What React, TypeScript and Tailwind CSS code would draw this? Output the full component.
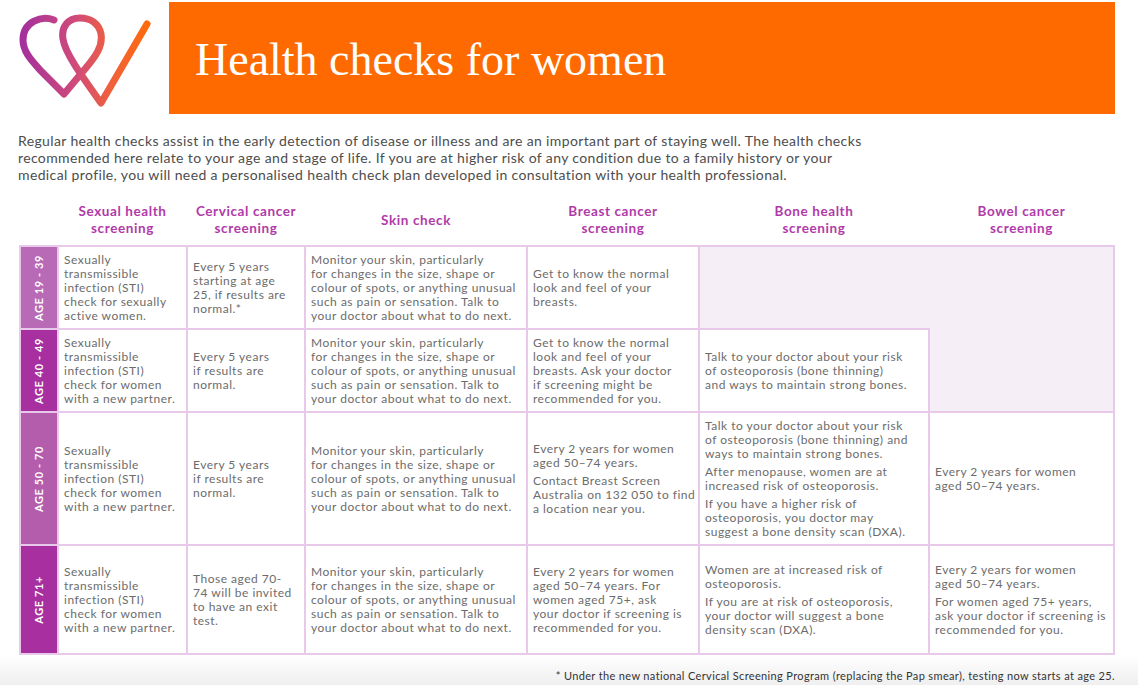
import React from "react";

const BORDER = "#e8c9ea";

const headers = [
  ["Sexual health", "screening"],
  ["Cervical cancer", "screening"],
  ["Skin check"],
  ["Breast cancer", "screening"],
  ["Bone health", "screening"],
  ["Bowel cancer", "screening"],
];

const skin = [
  [
    "Monitor your skin, particularly",
    "for changes in the size, shape or",
    "colour of spots, or anything unusual",
    "such as pain or sensation. Talk to",
    "your doctor about what to do next.",
  ],
];

const sti = [
  ["Sexually", "transmissible", "infection (STI)", "check for women", "with a new partner."],
];

const Logo = () => (
  <svg width="150" height="110" viewBox="0 0 150 110" className="block">
    <defs>
      <linearGradient id="lg" x1="18" y1="0" x2="148" y2="0" gradientUnits="userSpaceOnUse">
        <stop offset="0" stopColor="#a12f9e" />
        <stop offset="0.45" stopColor="#d24c78" />
        <stop offset="0.7" stopColor="#f0603c" />
        <stop offset="1" stopColor="#ff6b0c" />
      </linearGradient>
    </defs>
    <path
      d="M53 17 C40 12 22 19 22 37 C22 49 31 58 40 68 L63 91 L84 66 C95 53 102 43 100 31 C98 20 89 15 79 15 C67 15 60 24 62 36 C64 50 80 72 100 100 L146 21"
      fill="none"
      stroke="url(#lg)"
      strokeWidth="7"
      strokeLinecap="round"
      strokeLinejoin="round"
    />
  </svg>
);

const Cell = ({ paras, className = "" }: { paras: string[][]; className?: string }) => (
  <div className={`bg-white flex flex-col justify-center pl-[5px] text-[12px] leading-[14px] tracking-[0.5px] text-[#6c6c6c] whitespace-nowrap ${className}`}>
    {paras.map((p, i) => (
      <p key={i} className={i > 0 ? "mt-[4px]" : ""}>
        {p.map((l, j) => (
          <span key={j} className="block">
            {l}
          </span>
        ))}
      </p>
    ))}
  </div>
);

const Age = ({ label, color }: { label: string; color: string }) => (
  <div className="flex items-center justify-center" style={{ backgroundColor: color }}>
    <span className="[writing-mode:vertical-rl] rotate-180 text-white font-bold text-[11px] tracking-[0.6px]">
      {label}
    </span>
  </div>
);

export default function App() {
  return (
    <div
      className="w-[1138px] h-[685px] overflow-hidden bg-white flex flex-col"
      style={{ fontFamily: "Lato, 'Open Sans', sans-serif" }}
    >
      {/* top banner */}
      <div className="flex pt-[2px] pr-[23px]">
        <div className="w-[169px] h-[112px] flex items-center pl-[1px]">
          <Logo />
        </div>
        <div className="flex-1 h-[112px] bg-[#ff6a00] flex items-center pl-[26px]">
          <h1
            className="text-white text-[46px] leading-none pt-[4px]"
            style={{ fontFamily: "'Liberation Serif', serif" }}
          >
            Health checks for women
          </h1>
        </div>
      </div>

      <p className="pl-[18px] mt-[18px] text-[14px] leading-[17px] tracking-[0.37px] text-[#4d4d4d] whitespace-nowrap">
        Regular health checks assist in the early detection of disease or illness and are an important part of staying well. The health checks
        <br />
        recommended here relate to your age and stage of life. If you are at higher risk of any condition due to a family history or your
        <br />
        medical profile, you will need a personalised health check plan developed in consultation with your health professional.
      </p>

      <div className="pl-[19px] pr-[23px] mt-[20px]">
        {/* column headers */}
        <div className="grid grid-cols-[36px_127px_116px_220px_170px_228px_183px] gap-x-[2px] px-[2px] mb-[8px]">
          <div />
          {headers.map((h, i) => (
            <div key={i} className="flex flex-col justify-center items-center text-center text-[13.5px] leading-[17px] font-bold text-[#b13aa9] tracking-[0.6px] h-[34px]">
              {h.map((l, j) => (
                <span key={j} className="block">
                  {l}
                </span>
              ))}
            </div>
          ))}
        </div>

        {/* table */}
        <div
          className="grid grid-cols-[36px_127px_116px_220px_170px_228px_183px] grid-rows-[81px_81px_131px_107px] gap-[2px] p-[2px]"
          style={{ backgroundColor: BORDER }}
        >
          {/* row 1 */}
          <Age label="AGE 19 - 39" color="#b86ab6" />
          <Cell paras={[["Sexually", "transmissible", "infection (STI)", "check for sexually", "active women."]]} />
          <Cell paras={[["Every 5 years", "starting at age", "25, if results are", "normal.*"]]} />
          <Cell paras={skin} />
          <Cell paras={[["Get to know the normal", "look and feel of your", "breasts."]]} />
          <div className="col-start-6 col-span-2 row-start-1 row-span-2 bg-[#f6eef7]" />

          {/* row 2 */}
          <Age label="AGE 40 - 49" color="#a82f9f" />
          <Cell paras={sti} />
          <Cell paras={[["Every 5 years", "if results are", "normal."]]} />
          <Cell paras={skin} />
          <Cell paras={[["Get to know the normal", "look and feel of your", "breasts. Ask your doctor", "if screening might be", "recommended for you."]]} />
          <Cell
            className="col-start-6 row-start-2 relative z-10 -mt-[2px] -mr-[2px] border-t-2 border-r-2 border-[#e8c9ea]"
            paras={[["Talk to your doctor about your risk", "of osteoporosis (bone thinning)", "and ways to maintain strong bones."]]}
          />

          {/* row 3 */}
          <Age label="AGE 50 - 70" color="#b45dad" />
          <Cell paras={sti} />
          <Cell paras={[["Every 5 years", "if results are", "normal."]]} />
          <Cell paras={skin} />
          <Cell
            paras={[
              ["Every 2 years for women", "aged 50–74 years."],
              ["Contact Breast Screen", "Australia on 132 050 to find", "a location near you."],
            ]}
          />
          <Cell
            paras={[
              ["Talk to your doctor about your risk", "of osteoporosis (bone thinning) and", "ways to maintain strong bones."],
              ["After menopause, women are at", "increased risk of osteoporosis."],
              ["If you have a higher risk of", "osteoporosis, you doctor may", "suggest a bone density scan (DXA)."],
            ]}
          />
          <Cell paras={[["Every 2 years for women", "aged 50–74 years."]]} />

          {/* row 4 */}
          <Age label="AGE 71+" color="#a82f9f" />
          <Cell paras={sti} />
          <Cell paras={[["Those aged 70-", "74 will be invited", "to have an exit", "test."]]} />
          <Cell paras={skin} />
          <Cell paras={[["Every 2 years for women", "aged 50–74 years. For", "women aged 75+, ask", "your doctor if screening is", "recommended for you."]]} />
          <Cell
            paras={[
              ["Women are at increased risk of", "osteoporosis."],
              ["If you are at risk of osteoporosis,", "your doctor will suggest a bone", "density scan (DXA)."],
            ]}
          />
          <Cell
            paras={[
              ["Every 2 years for women", "aged 50–74 years."],
              ["For women aged 75+ years,", "ask your doctor if screening is", "recommended for you."],
            ]}
          />
        </div>
      </div>

      {/* footnote */}
      <div className="flex-1 bg-gradient-to-b from-white to-[#efefef] pr-[23px] pt-[14px] text-right text-[11px] leading-[13px] tracking-[0.36px] text-[#333]">
        * Under the new national Cervical Screening Program (replacing the Pap smear), testing now starts at age 25.
      </div>
    </div>
  );
}
